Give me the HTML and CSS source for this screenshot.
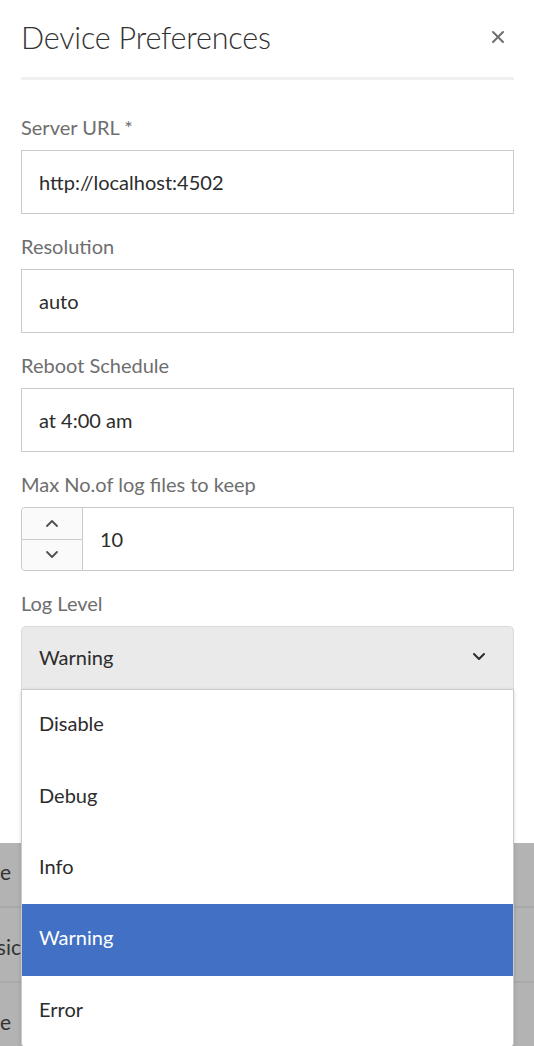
FILE: index.html
```html
<!DOCTYPE html>
<html lang="en">
<head>
<meta charset="utf-8">
<title>Device Preferences</title>
<link rel="stylesheet" href="styles.css">
</head>
<body>
<div class="modal">
  <div class="header">
    <h1 class="title">Device Preferences</h1>
    <button class="close" aria-label="Close">
      <svg width="14" height="14" viewBox="0 0 14 14"><path d="M2 2 L12 12 M12 2 L2 12" stroke="#6e6e6e" stroke-width="2" stroke-linecap="round"/></svg>
    </button>
  </div>
  <div class="divider"></div>

  <div class="field field-first">
    <label class="label">Server URL *</label>
    <div class="input">http://localhost:4502</div>
  </div>
  <div class="field">
    <label class="label">Resolution</label>
    <div class="input">auto</div>
  </div>
  <div class="field">
    <label class="label">Reboot Schedule</label>
    <div class="input">at 4:00 am</div>
  </div>
  <div class="field">
    <label class="label">Max No.of log files to keep</label>
    <div class="number">
      <div class="stepper">
        <div class="step">
          <svg width="14" height="9" viewBox="0 0 14 9"><path d="M2 7 L7 2 L12 7" fill="none" stroke="#505050" stroke-width="1.8" stroke-linecap="round" stroke-linejoin="round"/></svg>
        </div>
        <div class="step step-down">
          <svg width="14" height="9" viewBox="0 0 14 9"><path d="M2 2 L7 7 L12 2" fill="none" stroke="#505050" stroke-width="1.8" stroke-linecap="round" stroke-linejoin="round"/></svg>
        </div>
      </div>
      <div class="number-value">10</div>
    </div>
  </div>
  <div class="field">
    <label class="label">Log Level</label>
    <div class="select-wrap">
      <div class="select">
        <span>Warning</span>
        <svg width="14" height="9" viewBox="0 0 14 9"><path d="M2 2 L7 7 L12 2" fill="none" stroke="#2c2c2c" stroke-width="2" stroke-linecap="round" stroke-linejoin="round"/></svg>
      </div>
      <ul class="menu">
        <li class="item">Disable</li>
        <li class="item">Debug</li>
        <li class="item">Info</li>
        <li class="item selected">Warning</li>
        <li class="item">Error</li>
      </ul>
    </div>
  </div>
</div>
<div class="backdrop">
  <div class="bg-row"><div class="bg-cell bg-cell-short">Name</div></div>
  <div class="bg-row"><div class="bg-cell bg-cell-long">Basic</div></div>
  <div class="bg-row"><div class="bg-cell bg-cell-short">Name</div></div>
</div>
</body>
</html>
```

FILE: styles.css
```css
* { box-sizing: border-box; }
html, body { margin: 0; padding: 0; }
body {
  width: 534px;
  height: 1046px;
  overflow: hidden;
  background: #b3b3b3;
  font-family: Lato, "Noto Sans", sans-serif;
  color: #2c2c2c;
}
.modal {
  position: relative;
  z-index: 2;
  background: #ffffff;
  height: 843px;
  padding: 0 20px 0 21px;
}
.header {
  display: flex;
  align-items: center;
  justify-content: space-between;
  padding-top: 19px;
}
.title {
  margin: 0;
  font-size: 30.5px;
  line-height: 36px;
  font-weight: 300;
  color: #323232;
  letter-spacing: -0.2px;
}
.close {
  border: 0;
  background: none;
  padding: 0;
  margin-right: 9px;
  width: 14px;
  height: 14px;
  display: flex;
}
.divider {
  margin-top: 22px;
  height: 3px;
  background: #f0f0f0;
}
.field { margin-top: 20px; }
.field-first { margin-top: 35px; }
.label {
  display: block;
  font-size: 20px;
  line-height: 24px;
  color: #6e6e6e;
  margin-bottom: 11px;
}
.input {
  height: 64px;
  border: 1px solid #cacaca;
  display: flex;
  align-items: center;
  padding-left: 17px;
  font-size: 20px;
  color: #2c2c2c;
}
.number {
  height: 64px;
  border: 1px solid #cacaca;
  border-radius: 4px 0 0 4px;
  display: flex;
}
.stepper {
  width: 61px;
  border-right: 1px solid #cacaca;
  background: #fafafa;
  border-radius: 4px 0 0 4px;
  display: flex;
  flex-direction: column;
}
.step {
  flex: 1;
  display: flex;
  align-items: center;
  justify-content: center;
}
.step-down { border-top: 1px solid #cacaca; }
.number-value {
  flex: 1;
  display: flex;
  align-items: center;
  padding-left: 17px;
  font-size: 20px;
}
.select-wrap { position: relative; }
.select {
  height: 63px;
  border: 1px solid #dadada;
  border-bottom: 0;
  border-radius: 5px 5px 0 0;
  background: #eaeaea;
  display: flex;
  align-items: center;
  justify-content: space-between;
  padding: 0 27px 3px 17px;
  font-size: 20px;
}
.menu {
  position: absolute;
  top: 63px;
  left: 0;
  right: 0;
  margin: 0;
  padding: 0;
  list-style: none;
  background: #ffffff;
  border: 1px solid #cacaca;
  border-radius: 0 0 5px 5px;
  overflow: hidden;
  box-shadow: 0 1px 4px rgba(0,0,0,0.15);
}
.item {
  height: 71.4px;
  display: flex;
  align-items: center;
  padding: 0 0 5px 17px;
  font-size: 20px;
  color: #2c2c2c;
}
.item.selected {
  background: #4170c4;
  color: #ffffff;
}
.backdrop {
  margin-top: -10px;
}
.bg-row {
  height: 75px;
  border-bottom: 2px solid #a9a9a9;
  display: flex;
  align-items: center;
  padding-top: 4px;
}
.bg-cell {
  overflow: hidden;
  display: flex;
  justify-content: flex-end;
  white-space: nowrap;
  font-size: 21px;
  color: #333333;
}
.bg-cell-short { width: 11px; }
.bg-cell-long { width: 21px; }
```
